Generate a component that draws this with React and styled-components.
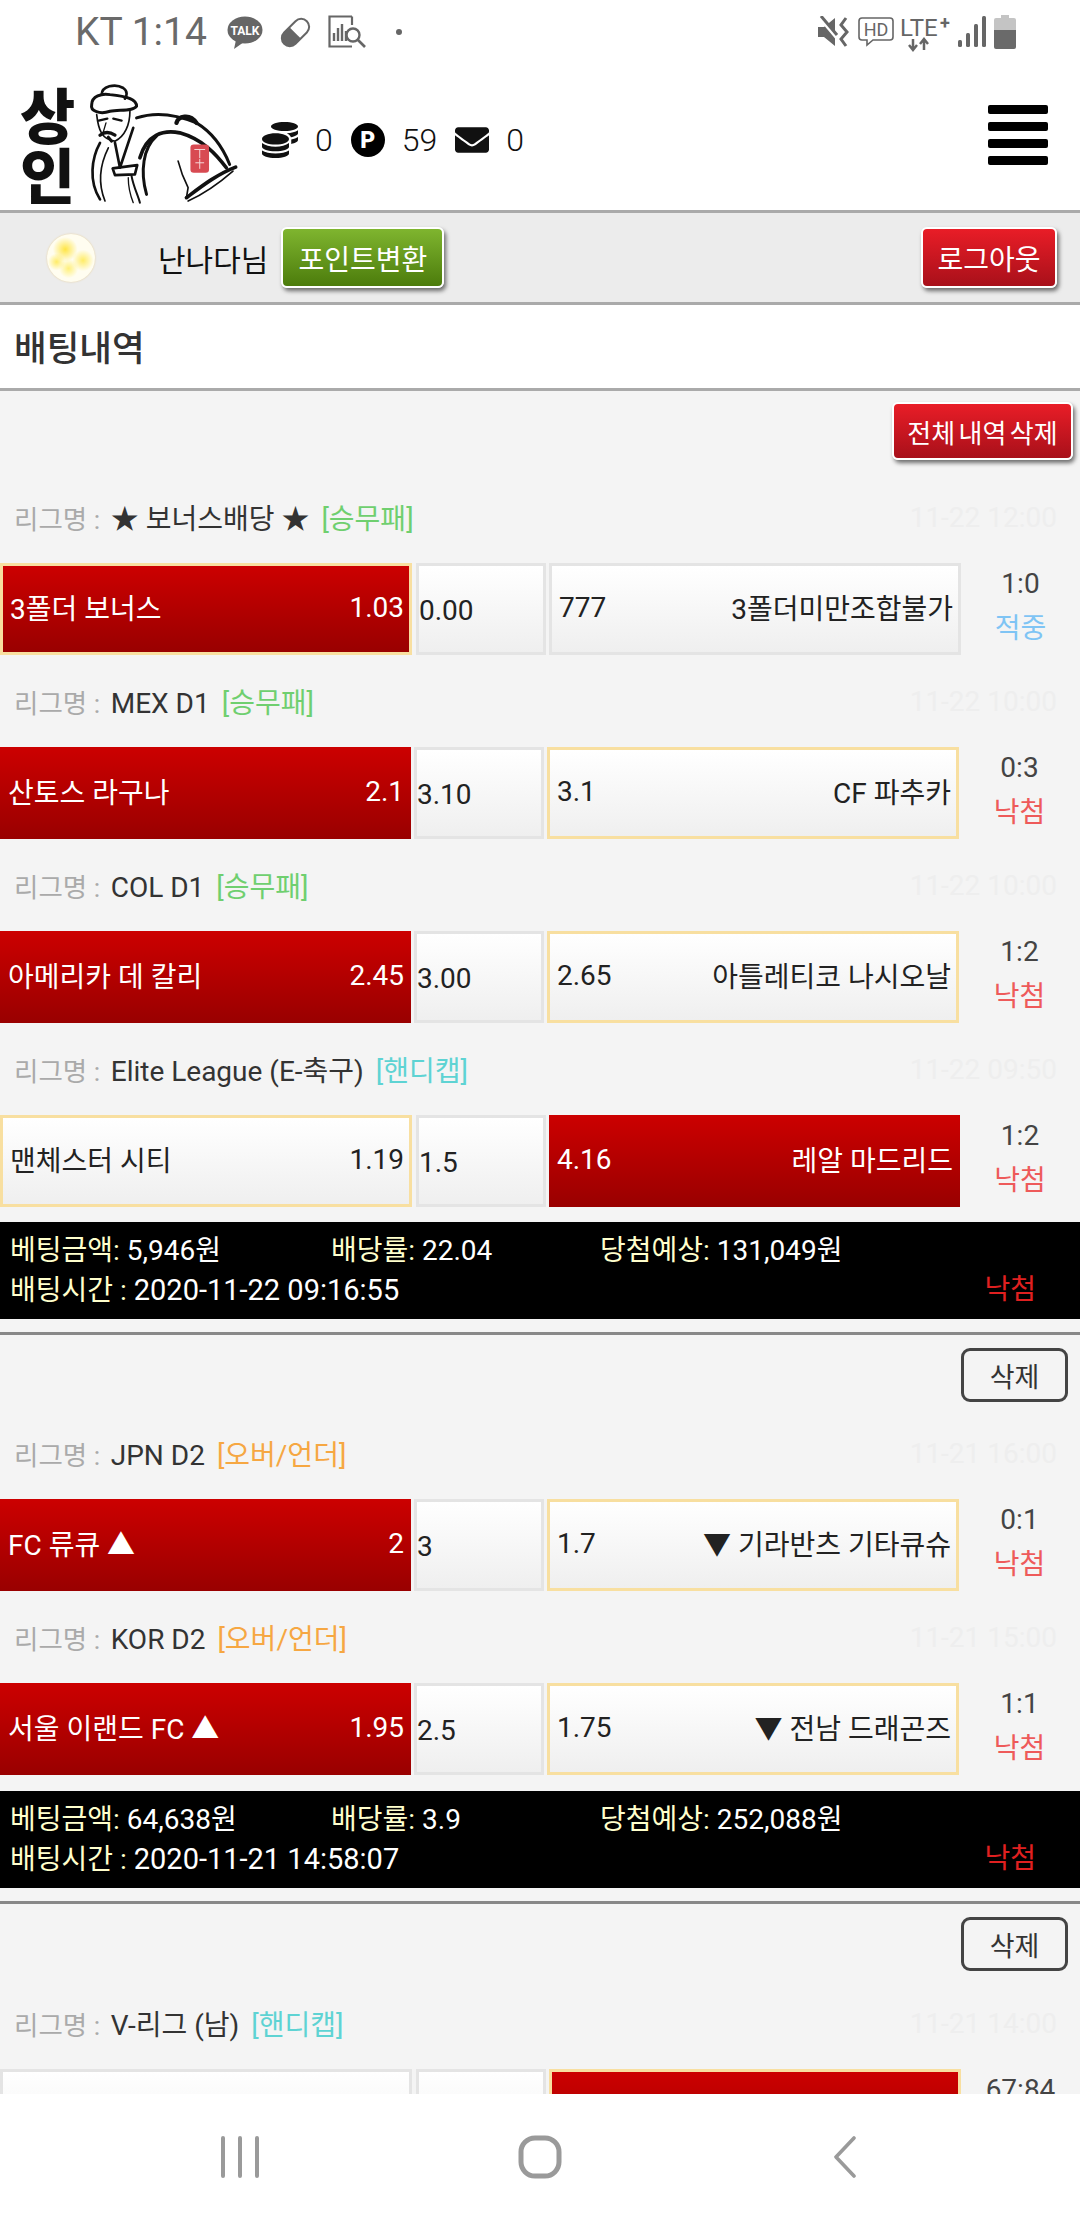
import React from "react"
import styled, { createGlobalStyle } from "styled-components"
import { FaCoins, FaEnvelope } from "react-icons/fa"

const GlobalStyle = createGlobalStyle`
  html, body {
    margin: 0;
    padding: 0;
    background: #fff;
  }
  * {
    box-sizing: border-box;
  }
`

const Screen = styled.div`
  position: relative;
  width: 1080px;
  height: 2220px;
  overflow: hidden;
  background: #f4f4f4;
  font-family: Roboto, "Noto Sans CJK KR", sans-serif;
  font-size: 28px;
  color: #222;
`

const StatusBar = styled.div`
  display: flex;
  align-items: center;
  justify-content: space-between;
  height: 64px;
  padding: 0 64px 0 75px;
  background: #fff;
  color: #666;
`

const StatusLeft = styled.div`
  display: flex;
  align-items: center;
  gap: 16px;
`

const StatusRight = styled.div`
  display: flex;
  align-items: center;
  gap: 6px;
`

const Carrier = styled.span`
  font-size: 39px;
  font-weight: 400;
  line-height: 64px;
  margin-right: 4px;
  color: #6a6a6a;
`

const StatusDot = styled.span`
  width: 6px;
  height: 6px;
  margin-left: 14px;
  border-radius: 50%;
  background: #666;
`

const Header = styled.header`
  display: flex;
  align-items: center;
  height: 149px;
  padding: 6px 32px 0 20px;
  background: #fff;
  border-bottom: 3px solid #aaa;
`

const Logo = styled.div`
  display: flex;
  align-items: flex-start;
  align-self: flex-start;
  width: 222px;
  height: 125px;
  margin: 13px 20px 0 0;
`

const LogoType = styled.div`
  display: flex;
  flex-direction: column;
  flex: none;
  width: 68px;
  font-family: "Noto Sans CJK KR", sans-serif;
  font-weight: 900;
  font-size: 60px;
  line-height: 60px;
  color: #111;
`

const Wallet = styled.div`
  display: flex;
  align-items: center;
  font-size: 32px;
  font-weight: 300;
  color: #111;
  flex: 1;
`

const WalletValue = styled.span`
  margin: 0 18px 0 17px;
`

const PointBadge = styled.span`
  display: flex;
  align-items: center;
  justify-content: center;
  width: 34px;
  height: 34px;
  border-radius: 50%;
  background: #000;
  color: #fff;
  font-size: 23px;
  font-weight: 900;
`

const Burger = styled.div`
  display: flex;
  flex-direction: column;
  gap: 8px;
  width: 60px;
  margin-bottom: 10px;
`

const BurgerBar = styled.span`
  display: block;
  height: 9px;
  border-radius: 2px;
  background: #000;
`

const UserBar = styled.div`
  display: flex;
  align-items: center;
  height: 92px;
  padding: 0 23px 0 47px;
  background: #ececec;
  border-bottom: 3px solid #aaa;
`

const Avatar = styled.div`
  width: 48px;
  height: 48px;
  border-radius: 50%;
  margin-right: 63px;
  background:
    radial-gradient(circle at 38% 32%, #ffe545 0, rgba(255, 229, 69, 0) 28%),
    radial-gradient(circle at 75% 55%, #ffec66 0, rgba(255, 236, 102, 0) 24%),
    radial-gradient(circle at 20% 58%, #ffec66 0, rgba(255, 236, 102, 0) 18%),
    radial-gradient(circle at 45% 72%, #fff07a 0, rgba(255, 240, 122, 0) 22%),
    #fffdf0;
  box-shadow: 0 0 2px #e6cf9a;
`

const UserName = styled.span`
  font-size: 30px;
  color: #111;
  margin-right: 13px;
`

const GlossButton = styled.button`
  display: flex;
  align-items: center;
  justify-content: center;
  height: ${props => props.$height || 61}px;
  width: ${props => props.$width}px;
  padding: 0;
  border: 2px solid #fff;
  border-radius: 6px;
  background: ${props =>
    props.$green
      ? "linear-gradient(#7fb52f, #4c7c0c)"
      : "linear-gradient(#e91d27, #a8101a)"};
  box-shadow: 2px 3px 4px rgba(0, 0, 0, 0.55);
  color: #fff;
  font-family: inherit;
  font-size: ${props => props.$size || 28}px;
  word-spacing: ${props => props.$wordGap || 0}px;
  white-space: nowrap;
  margin-left: ${props => (props.$push ? "auto" : 0)};
`

const TitleBar = styled.h1`
  display: flex;
  align-items: center;
  height: 86px;
  margin: 0;
  padding: 0 0 2px 14px;
  background: #fff;
  border-bottom: 3px solid #aaa;
  font-size: 35.5px;
  font-weight: 500;
  color: #333;
`

const Toolbar = styled.div`
  display: flex;
  justify-content: flex-end;
  height: ${props => props.$height}px;
  padding: ${props => props.$top}px ${props => props.$right}px 0 0;
`

const DeleteButton = styled.button`
  width: 107px;
  height: 54px;
  padding: 0;
  border: 3px solid #444;
  border-radius: 9px;
  background: #f4f4f4;
  color: #333;
  font-family: inherit;
  font-size: 27px;
`

const LeagueRow = styled.div`
  display: flex;
  align-items: center;
  justify-content: space-between;
  height: 92px;
  padding: 0 23px 0 14px;
`

const LeagueLabel = styled.span`
  margin-right: 4px;
  color: #aaa;
  font-size: 26.5px;
`

const LeagueName = styled.span`
  color: #333;
  font-size: 28px;
`

const LeagueTag = styled.span`
  margin-left: 12px;
  font-size: 28px;
  color: ${props => props.$color};
`

const MatchTime = styled.span`
  color: #eeeeee;
`

const MatchRow = styled.div`
  display: flex;
  align-items: stretch;
  height: 92px;
`

const TeamCell = styled.div`
  display: flex;
  align-items: center;
  justify-content: space-between;
  flex: none;
  width: ${props => (props.$flat ? 411 : 412)}px;
  padding: 0 ${props => (props.$flat ? 7 : 5)}px 4px ${props => (props.$flat ? 8 : 7)}px;
  border: ${props => (props.$flat ? "none" : `3px solid ${props.$picked ? "#f8dfa0" : "#e4e4e4"}`)};
  background: ${props =>
    props.$win
      ? "linear-gradient(#cc0000, #990000)"
      : "linear-gradient(#fff, #efefef)"};
  color: ${props => (props.$win ? "#fff" : "#222")};
  white-space: nowrap;
`

const DrawCell = styled.div`
  display: flex;
  align-items: center;
  flex: none;
  width: 130px;
  margin: 0 3px 0 ${props => (props.$flat ? 3 : 4)}px;
  padding: 3px 0 0 0;
  border: 3px solid #e4e4e4;
  background: linear-gradient(#fff, #efefef);
`

const ScoreCell = styled.div`
  display: flex;
  flex-direction: column;
  align-items: center;
  justify-content: center;
  flex: 1;
  gap: 9px;
  line-height: 36px;
  color: #444;
  padding-bottom: 6px;
`

const ScoreResult = styled.span`
  color: ${props => (props.$hit ? "#7fc4f4" : "#ee5a5a")};
`

const SummaryBar = styled.div`
  display: flex;
  flex-direction: column;
  justify-content: center;
  gap: 3px;
  height: 97px;
  margin-top: ${props => props.$top}px;
  padding: 0 44px 0 10px;
  background: #000;
  color: #fff;
  line-height: 36px;
`

const SummaryLine = styled.div`
  display: flex;
  align-items: center;
`

const SummaryItem = styled.span`
  flex: none;
  width: ${props => props.$width}px;
  white-space: nowrap;
`

const SummaryLabel = styled.span`
  color: #ffffcc;
`

const SummaryTime = styled.span`
  font-size: 29px;
`

const SummaryResult = styled.span`
  margin-left: auto;
  color: #e02020;
`

const Divider = styled.hr`
  height: 3px;
  margin: 13px 0 0;
  border: none;
  background: #888;
`

const NavBar = styled.nav`
  position: absolute;
  left: 0;
  right: 0;
  bottom: 0;
  display: flex;
  align-items: center;
  justify-content: center;
  height: 126px;
  background: #fff;
`

const NavItem = styled.div`
  display: flex;
  justify-content: center;
  width: 300px;
  padding-left: ${props => props.$nudge || 0}px;
`

const TalkIcon = () => (
  <svg width="36" height="33" viewBox="0 0 36 33">
    <ellipse cx="18" cy="14" rx="17.5" ry="13.5" fill="#666" />
    <path d="M9 24 L7 33 L17 26 Z" fill="#666" />
    <text x="18" y="19" textAnchor="middle" fontSize="12" fontWeight="700" fill="#fff" fontFamily="Roboto">TALK</text>
  </svg>
)

const PillIcon = () => (
  <svg width="33" height="33" viewBox="0 0 33 33">
    <g transform="rotate(-45 16.5 16.5)">
      <rect x="0.5" y="8.5" width="32" height="16" rx="8" fill="#fff" stroke="#666" strokeWidth="2" />
      <path d="M16 8.5 H8.5 a8 8 0 0 0 0 16 H16 Z" fill="#666" />
    </g>
  </svg>
)

const ReportIcon = () => (
  <svg width="38" height="34" viewBox="0 0 38 34" fill="none" stroke="#666">
    <path d="M24 1.5 H1.5 V31.5 H24" strokeWidth="2.2" />
    <path d="M24 1.5 V10" strokeWidth="2.2" />
    <path d="M6 26 V18 M10 26 V13 M14 26 V9 M18 26 V16" strokeWidth="2.4" />
    <circle cx="25" cy="20" r="6.5" strokeWidth="2.4" />
    <path d="M30 25 L37 32" strokeWidth="2.6" />
  </svg>
)

const MuteIcon = () => (
  <svg width="34" height="32" viewBox="0 0 34 32" fill="#666">
    <path d="M0 11 H6 L17 2 V30 L6 21 H0 Z" />
    <path d="M1 1 L22 26" stroke="#fff" strokeWidth="3" />
    <path d="M3 0 L19 19" stroke="#666" strokeWidth="3" />
    <path d="M28 2 L23 9 L29 16 L23 23 L28 30" fill="none" stroke="#666" strokeWidth="3" />
  </svg>
)

const HdIcon = () => (
  <svg width="36" height="30" viewBox="0 0 36 30">
    <path d="M4 1 H32 a3 3 0 0 1 3 3 V20 a3 3 0 0 1 -3 3 H15 L9 28 V23 H4 a3 3 0 0 1 -3 -3 V4 a3 3 0 0 1 3 -3 Z" fill="none" stroke="#666" strokeWidth="1.6" />
    <text x="18" y="19" textAnchor="middle" fontSize="18" fill="#666" fontFamily="Roboto">HD</text>
  </svg>
)

const LteIcon = () => (
  <svg width="52" height="40" viewBox="0 -2 52 40">
    <text x="0" y="22" fontSize="24" fill="#666" fontFamily="Roboto">LTE</text>
    <text x="40" y="15" fontSize="18" fontWeight="700" fill="#666" fontFamily="Roboto">+</text>
    <path d="M13 25 V35 M9 31 L13 36 L17 31" fill="none" stroke="#666" strokeWidth="2.5" />
    <path d="M24 36 V26 M20 30 L24 25 L28 30" fill="none" stroke="#666" strokeWidth="2.5" />
  </svg>
)

const SignalIcon = () => (
  <svg width="30" height="32" viewBox="0 0 30 32" fill="#666">
    <rect x="0" y="24" width="4" height="7" rx="1.5" />
    <rect x="8" y="17" width="4" height="14" rx="1.5" />
    <rect x="16" y="8" width="4" height="23" rx="1.5" />
    <rect x="24" y="0" width="4" height="31" rx="1.5" />
  </svg>
)

const BatteryIcon = () => (
  <svg width="22" height="34" viewBox="0 0 22 34">
    <path d="M7 0 H15 V3 H20 a2 2 0 0 1 2 2 V15 H0 V5 a2 2 0 0 1 2 -2 H7 Z" fill="#c4c4c4" />
    <path d="M0 15 H22 V32 a2 2 0 0 1 -2 2 H2 a2 2 0 0 1 -2 -2 Z" fill="#6a6a6a" />
  </svg>
)

const Peddler = () => (
  <svg width="152" height="123" viewBox="265 65 455 370" fill="none" stroke="#111" strokeLinecap="round" strokeLinejoin="round">
    {/* hat */}
    <path d="M275 130 C275 105 305 95 330 100 C385 105 410 115 410 135 C400 150 360 145 330 150 C300 160 270 150 275 130 Z" strokeWidth="9" />
    <path d="M305 100 C305 75 345 65 370 80 C385 90 380 105 375 112" strokeWidth="8" />
    {/* face */}
    <path d="M290 160 C295 205 305 235 345 240 C375 225 390 190 390 150" strokeWidth="5" />
    <path d="M296 178 L322 172 M340 172 L365 178" strokeWidth="7" />
    <path d="M318 185 L310 212 L322 214" strokeWidth="4" />
    <path d="M300 222 C315 210 330 212 345 222" strokeWidth="10" />
    <path d="M325 228 L335 240" strokeWidth="9" />
    {/* robe */}
    <path d="M345 245 L360 320 L400 200" strokeWidth="8" />
    <path d="M300 245 C275 290 265 360 300 415" strokeWidth="8" />
    <path d="M325 260 C295 320 295 370 315 420" strokeWidth="5" />
    <path d="M338 322 L412 312 L405 340 L345 342 Z" strokeWidth="8" />
    <path d="M395 345 C400 375 415 405 420 425" strokeWidth="6" />
    <path d="M385 350 C385 380 390 400 400 425" strokeWidth="4" />
    {/* pack */}
    <path d="M410 170 C470 150 530 160 590 185 C640 215 670 260 690 310" strokeWidth="9" />
    <path d="M420 290 C440 220 490 205 540 215 C610 235 650 280 680 320" strokeWidth="11" />
    <path d="M470 225 C430 260 420 330 440 400" strokeWidth="9" />
    <path d="M530 185 C535 165 570 155 590 185" strokeWidth="13" />
    <path d="M560 410 C600 380 650 340 708 318" strokeWidth="11" />
    <path d="M560 410 L565 380 C550 350 540 320 535 300" strokeWidth="5" />
    <path d="M565 420 C620 395 660 365 700 330" strokeWidth="5" />
    <rect x="572" y="250" width="56" height="85" rx="10" fill="#d84a52" stroke="none" />
    <path d="M585 265 H615 M600 265 V290 M588 305 H612 M600 295 V322" stroke="#f6d6d8" strokeWidth="3" />
  </svg>
)

const MenuGlyph = () => (
  <svg width="40" height="42" viewBox="0 0 40 42" fill="none" stroke="#9a9a9a" strokeWidth="4" strokeLinecap="round">
    <path d="M3 2 V40 M20 2 V40 M37 2 V40" />
  </svg>
)

const HomeGlyph = () => (
  <svg width="44" height="44" viewBox="0 0 44 44" fill="none" stroke="#9a9a9a" strokeWidth="5">
    <rect x="3" y="3" width="38" height="38" rx="14" />
  </svg>
)

const BackGlyph = () => (
  <svg width="24" height="42" viewBox="0 0 24 42" fill="none" stroke="#9a9a9a" strokeWidth="3.6" strokeLinecap="round" strokeLinejoin="round">
    <path d="M21 2 L3 21 L21 40" />
  </svg>
)

const TAGS = {
  wdl: { text: "[승무패]", color: "#6fcf6f" },
  handicap: { text: "[핸디캡]", color: "#5ed3d3" },
  overUnder: { text: "[오버/언더]", color: "#f6a742" },
}

const groups = [
  {
    toolbarHeight: 80,
    toolbarTop: 11,
    toolbarRight: 7,
    wide: true,
    summaryTop: 15,
    amount: "5,946원",
    rate: "22.04",
    expected: "131,049원",
    time: "2020-11-22 09:16:55",
    matches: [
      { league: "★ 보너스배당 ★", tag: "wdl", date: "11-22 12:00", home: "3폴더 보너스", homeOdd: "1.03", draw: "0.00", awayOdd: "777", away: "3폴더미만조합불가", pick: "home", box: true, score: "1:0", hit: true },
      { league: "MEX D1", tag: "wdl", date: "11-22 10:00", home: "산토스 라구나", homeOdd: "2.1", draw: "3.10", awayOdd: "3.1", away: "CF 파추카", pick: "home", goldAway: true, score: "0:3" },
      { league: "COL D1", tag: "wdl", date: "11-22 10:00", home: "아메리카 데 칼리", homeOdd: "2.45", draw: "3.00", awayOdd: "2.65", away: "아틀레티코 나시오날", pick: "home", goldAway: true, score: "1:2" },
      { league: "Elite League (E-축구)", tag: "handicap", date: "11-22 09:50", home: "맨체스터 시티", homeOdd: "1.19", draw: "1.5", awayOdd: "4.16", away: "레알 마드리드", pick: "away", box: true, goldHome: true, score: "1:2" },
    ],
  },
  {
    toolbarHeight: 72,
    toolbarTop: 13,
    toolbarRight: 12,
    summaryTop: 16,
    amount: "64,638원",
    rate: "3.9",
    expected: "252,088원",
    time: "2020-11-21 14:58:07",
    matches: [
      { league: "JPN D2", tag: "overUnder", date: "11-21 16:00", home: "FC 류큐 ▲", homeOdd: "2", draw: "3", awayOdd: "1.7", away: "▼ 기라반츠 기타큐슈", pick: "home", goldAway: true, score: "0:1" },
      { league: "KOR D2", tag: "overUnder", date: "11-21 15:00", home: "서울 이랜드 FC ▲", homeOdd: "1.95", draw: "2.5", awayOdd: "1.75", away: "▼ 전남 드래곤즈", pick: "home", goldAway: true, score: "1:1" },
    ],
  },
  {
    toolbarHeight: 73,
    toolbarTop: 13,
    toolbarRight: 12,
    matches: [
      { league: "V-리그 (남)", tag: "handicap", date: "11-21 14:00", home: "", homeOdd: "", draw: "", awayOdd: "", away: "", pick: "away", box: true, goldAway: true, score: "67:84" },
    ],
  },
]

function Match({ match }) {
  const tag = TAGS[match.tag]
  const flat = !match.box
  return (
    <>
      <LeagueRow>
        <span>
          <LeagueLabel>리그명 : </LeagueLabel>
          <LeagueName>{match.league}</LeagueName>
          <LeagueTag $color={tag.color}>{tag.text}</LeagueTag>
        </span>
        <MatchTime>{match.date}</MatchTime>
      </LeagueRow>
      <MatchRow>
        <TeamCell $flat={flat} $win={match.pick === "home"} $picked={match.pick === "home" || match.goldHome}>
          <span>{match.home}</span>
          <span>{match.homeOdd}</span>
        </TeamCell>
        <DrawCell $flat={flat}>{match.draw}</DrawCell>
        <TeamCell
          $flat={match.pick === "away" && !match.goldAway}
          $win={match.pick === "away"}
          $picked={match.goldAway}
        >
          <span>{match.awayOdd}</span>
          <span>{match.away}</span>
        </TeamCell>
        <ScoreCell>
          <span>{match.score}</span>
          <ScoreResult $hit={match.hit}>{match.hit ? "적중" : "낙첨"}</ScoreResult>
        </ScoreCell>
      </MatchRow>
    </>
  )
}

function App() {
  return (
    <Screen>
      <GlobalStyle />
      <StatusBar>
        <StatusLeft>
          <Carrier>KT 1:14</Carrier>
          <TalkIcon />
          <PillIcon />
          <ReportIcon />
          <StatusDot />
        </StatusLeft>
        <StatusRight>
          <MuteIcon />
          <HdIcon />
          <LteIcon />
          <SignalIcon />
          <BatteryIcon />
        </StatusRight>
      </StatusBar>

      <Header>
        <Logo>
          <LogoType>
            <span>상</span>
            <span>인</span>
          </LogoType>
          <Peddler />
        </Logo>
        <Wallet>
          <FaCoins size={36} />
          <WalletValue>0</WalletValue>
          <PointBadge>P</PointBadge>
          <WalletValue>59</WalletValue>
          <FaEnvelope size={34} />
          <WalletValue>0</WalletValue>
        </Wallet>
        <Burger>
          <BurgerBar />
          <BurgerBar />
          <BurgerBar />
          <BurgerBar />
        </Burger>
      </Header>

      <UserBar>
        <Avatar />
        <UserName>난나다님</UserName>
        <GlossButton $green $width={163}>포인트변환</GlossButton>
        <GlossButton $push $width={136}>로그아웃</GlossButton>
      </UserBar>

      <TitleBar>배팅내역</TitleBar>

      {groups.map((group, i) => (
        <section key={i}>
          <Toolbar $height={group.toolbarHeight} $top={group.toolbarTop} $right={group.toolbarRight}>
            {group.wide ? (
              <GlossButton $width={181} $height={58} $size={26} $wordGap={-3}>전체 내역 삭제</GlossButton>
            ) : (
              <DeleteButton>삭제</DeleteButton>
            )}
          </Toolbar>
          {group.matches.map((match, j) => (
            <Match key={j} match={match} />
          ))}
          {group.amount && (
            <>
              <SummaryBar $top={group.summaryTop}>
                <SummaryLine>
                  <SummaryItem $width={321}><SummaryLabel>베팅금액:</SummaryLabel> {group.amount}</SummaryItem>
                  <SummaryItem $width={269}><SummaryLabel>배당률:</SummaryLabel> {group.rate}</SummaryItem>
                  <SummaryItem><SummaryLabel>당첨예상:</SummaryLabel> {group.expected}</SummaryItem>
                </SummaryLine>
                <SummaryLine>
                  <span><SummaryLabel>배팅시간 :</SummaryLabel> <SummaryTime>{group.time}</SummaryTime></span>
                  <SummaryResult>낙첨</SummaryResult>
                </SummaryLine>
              </SummaryBar>
              <Divider />
            </>
          )}
        </section>
      ))}

      <NavBar>
        <NavItem><MenuGlyph /></NavItem>
        <NavItem><HomeGlyph /></NavItem>
        <NavItem $nudge={10}><BackGlyph /></NavItem>
      </NavBar>
    </Screen>
  )
}

export default App
